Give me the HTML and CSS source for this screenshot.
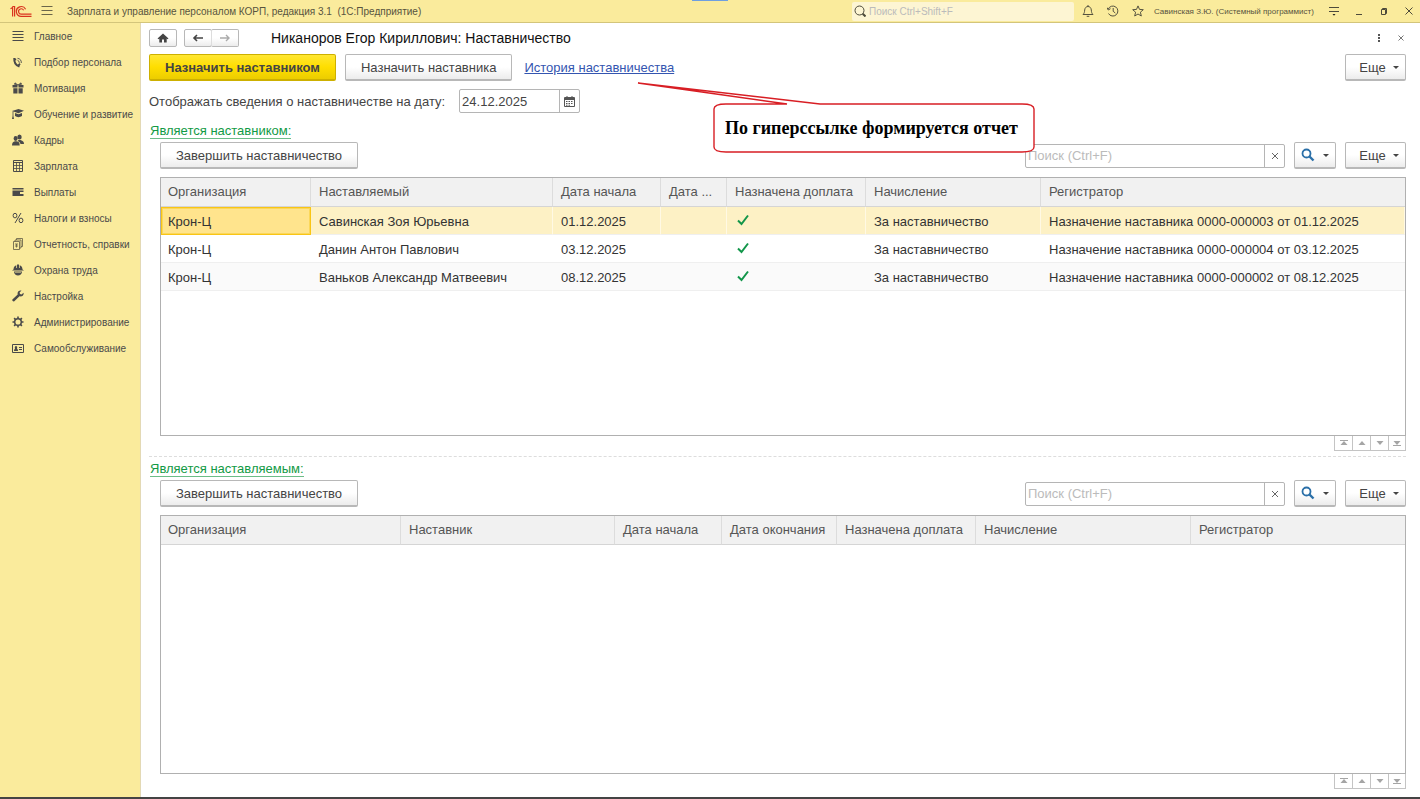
FILE: index.html
```html
<!DOCTYPE html>
<html lang="ru">
    <head>
        <meta charset="utf-8">
        <title>Никаноров Егор Кириллович: Наставничество</title>
        <link rel="stylesheet" href="styles.css">
    </head>
    <body>
        <!-- Top bar -->
        <header class="topbar">
            <svg class="logo" width="22" height="13" viewBox="0 0 22 13" fill="none" stroke="#d9341f" stroke-width="1.2">
                <path d="M0.5 3.8L2.600 2.500V11.500M2.300 1.500H4.600V11.500"/>
                <path d="M15.6 4.2A4.9 4.9 0 1 0 11.5 11.400H21.5"/>
                <path d="M13.6 5.200A2.700 2.700 0 1 0 11.5 9.200H21.5"/>
            </svg>
            <button class="icon-btn menu-btn" aria-label="Меню">
                <svg width="12" height="10" viewBox="0 0 12 10" stroke="#6b664a"><path d="M0.500 .5H11.500M0.500 4.500H11.500M0.500 8.500H11.500"/></svg>
            </button>
            <span class="app-title">Зарплата и управление персоналом КОРП, редакция 3.1&nbsp; (1С:Предприятие)</span>
            <label class="top-search">
                <svg width="12" height="12" viewBox="0 0 12 12" fill="none" stroke="#4d4a3a"><circle cx="5.500" cy="5.500" r="4.500"/><path d="M8.700 8.700L11.500 11.500" stroke-width="2"/></svg>
                <input type="text" placeholder="Поиск Ctrl+Shift+F" aria-label="Поиск">
            </label>
            <div class="top-icons">
                <button class="icon-btn" aria-label="Оповещения">
                    <svg width="12" height="12" viewBox="0 0 12 12" fill="none" stroke="#55523f"><path d="M1 9.500C2.500 8 2.500 7 2.700 5C2.900 2.800 4.200 1.500 6 1.500S9.100 2.800 9.300 5C9.500 7 9.500 8 11 9.500ZM6 0V1.500M4.700 11.300H7.300"/></svg>
                </button>
                <button class="icon-btn" aria-label="История">
                    <svg width="12" height="12" viewBox="0 0 12 12" fill="none" stroke="#55523f"><path d="M1.300 4A5 5 0 1 1 1.500 8.500M6.200 3V6.300L8.300 8"/><path d="M0 2.500L1.200 5L3.500 3.700"/></svg>
                </button>
                <button class="icon-btn" aria-label="Избранное">
                    <svg width="12" height="12" viewBox="0 0 12 12" fill="none" stroke="#55523f"><path d="M6 .9L7.500 4.400L11.300 4.700L8.400 7.200L9.300 11L6 9L2.700 11L3.600 7.200L.7 4.700L4.500 4.400Z"/></svg>
                </button>
            </div>
            <span class="user">Савинская З.Ю. (Системный программист)</span>
            <div class="window-icons">
                <button class="icon-btn" aria-label="Сервис">
                    <svg width="12" height="12" viewBox="0 0 12 12" stroke="#4d4a3a"><path d="M1 2.500H11M1 6.500H11"/><path d="M4.500 9L6 10.800L7.500 9Z" fill="#222" stroke="none"/></svg>
                </button>
                <button class="icon-btn" aria-label="Свернуть">
                    <svg width="12" height="12" viewBox="0 0 12 12" stroke="#4d4a3a"><path d="M3 9.500H9"/></svg>
                </button>
                <button class="icon-btn" aria-label="Восстановить">
                    <svg width="12" height="12" viewBox="0 0 12 12" fill="none" stroke="#4d4a3a"><path d="M3.500 4.500H7.500V9.500H3.500ZM4.500 4.500V3.500H8.500V8.500H7.500"/></svg>
                </button>
                <button class="icon-btn" aria-label="Закрыть">
                    <svg width="12" height="12" viewBox="0 0 12 12" stroke="#4d4a3a"><path d="M2.500 2.500L9.500 9.500M9.500 2.500L2.500 9.500"/></svg>
                </button>
            </div>
            <i class="screen-tab"></i>
        </header>

        <div class="page">
            <!-- Sections -->
            <nav class="sidebar">
                <a href="#"><svg width="12" height="12" viewBox="0 0 12 12" stroke="#4a4a4a"><path d="M0.500 1.500H11.500M0.500 4.500H11.500M0.500 7.500H11.500M0.500 10.500H11.500"/></svg>Главное</a>
                <a href="#"><svg width="12" height="12" viewBox="0 0 12 12" fill="none" stroke="#4a4a4a"><path d="M2.300 2C2 6 4 9.500 7.500 10.500" stroke-width="2"/><path d="M2 3.700L4.200 3.300M6.300 9.700L8 7.700" stroke-width="1.800"/><path d="M5.500 4.300A2.500 2.500 0 0 1 7.300 6.800M5.500 2.300A4.500 4.500 0 0 1 9.300 7" stroke-width=".9"/></svg>Подбор персонала</a>
                <a href="#"><svg width="12" height="12" viewBox="0 0 12 12" fill="#4a4a4a"><path d="M.5 3H5.500V5.500H.5ZM6.500 3H11.500V5.500H6.500ZM1.300 6.200H5.500V11.500H1.300ZM6.500 6.200H10.700V11.500H6.500Z"/><path d="M6 3L3 .8L2.300 2.300ZM6 3L9 .8L9.700 2.300Z" stroke="#4a4a4a" stroke-width=".6"/></svg>Мотивация</a>
                <a href="#"><svg width="12" height="12" viewBox="0 0 12 12" fill="#4a4a4a"><path d="M0 3L6.500 1L12 2.800L6.500 5.200ZM3 5L6.500 6.200L10 5V8C8 9.500 5 9.500 3 8ZM.6 3.500H1.400V8L2 11H0L.6 8Z"/></svg>Обучение и развитие</a>
                <a href="#"><svg width="12" height="12" viewBox="0 0 12 12" fill="#4a4a4a"><ellipse cx="7.500" cy="3" rx="2.200" ry="2.600"/><ellipse cx="3.600" cy="4.500" rx="2" ry="2.400"/><path d="M6.500 6L8.500 6C11 7 12 7.500 12 10H8.500C8 8 7 7.500 5.700 7ZM0 11.500C0 8.500 1 8 3 7.300H4.500C7 8 7.700 8.500 7.700 11.500Z"/></svg>Кадры</a>
                <a href="#"><svg width="12" height="12" viewBox="0 0 12 12" fill="none" stroke="#4a4a4a"><path d="M1.500 .5H10.500V11.500H1.500ZM1.500 2.500H10.500"/><path d="M1.500 5.500H10.500M1.500 8.500H10.500M4.500 3V11M7.500 3V11" stroke-width=".8"/></svg>Зарплата</a>
                <a href="#"><svg width="12" height="12" viewBox="0 0 12 12" fill="#4a4a4a"><path d="M.5 2H11.500V3.500H.5ZM.5 4.500H11.500V6H8V8H11.500V10H.5Z"/></svg>Выплаты</a>
                <a href="#"><svg width="12" height="12" viewBox="0 0 12 12" fill="none" stroke="#4a4a4a"><ellipse cx="3" cy="3.600" rx="1.900" ry="2.300"/><ellipse cx="9" cy="8.400" rx="1.900" ry="2.300"/><path d="M9 1L3 11"/></svg>Налоги и взносы</a>
                <a href="#"><svg width="12" height="12" viewBox="0 0 12 12" fill="none" stroke="#5f5b45" stroke-width=".8"><path d="M1.500 3.500H7.500V11.500H1.500ZM3 3.500V2H9V10H7.500M4.500 2V.5H10.500V8.500H9M3 6H6M3 8H6M4.500 6V9.500"/></svg>Отчетность, справки</a>
                <a href="#"><svg width="12" height="12" viewBox="0 0 12 12" fill="#4a4a4a"><path d="M1.500 5.500C1.500 3 3 1.500 4.300 1.300V4H5V.5H7V4H7.700V1.300C9 1.500 10.500 3 10.500 5.500L12 6.500H0ZM2 7.500H10C10 10 8 11.500 6 11.500S2 10 2 7.500ZM3 8.500H9V8H3Z" fill-rule="evenodd"/></svg>Охрана труда</a>
                <a href="#"><svg width="12" height="12" viewBox="0 0 12 12" fill="#4a4a4a"><path d="M11.500 2.800L9.500 4.500L8 4L7.600 2.500L9.500 .6C7 0 5 2 5.700 4.500L.4 9.600C-.2 10.500 1.200 12 2.300 11.300L7.500 6.300C10 7 12.200 5 11.500 2.800Z"/></svg>Настройка</a>
                <a href="#"><svg width="12" height="12" viewBox="0 0 12 12" fill="none" stroke="#4a4a4a"><circle cx="6" cy="6" r="3.300" stroke-width="1.500"/><path d="M6 .5V2.500M6 9.500V11.500M.5 6H2.500M9.500 6H11.500M2.100 2.100L3.500 3.500M8.500 8.500L9.900 9.900M9.900 2.100L8.500 3.500M3.500 8.500L2.100 9.900" stroke-width="1.600"/></svg>Администрирование</a>
                <a href="#"><svg width="12" height="12" viewBox="0 0 12 12" fill="none" stroke="#4a4a4a"><path d="M.5 2.500H11.500V10.500H.5ZM7 5.500H10M7 7.500H10"/><path d="M2 9C2 7 3 7.200 3 6.500C2.500 5 3 4 4 4S5.500 5 5 6.500C5 7.200 6 7 6 9Z" fill="#4a4a4a" stroke="none"/></svg>Самообслуживание</a>
            </nav>

            <main class="content">
                <div class="form-head">
                    <button class="nav-btn home" aria-label="Домой">
                        <svg width="12" height="10" viewBox="0 0 12 10" fill="#444"><path d="M6 .5L11.500 5.500L10.500 6.300L9.700 5.600V9.500H7V6.500H5V9.500H2.300V5.600L1.500 6.300L.5 5.500Z"/></svg>
                    </button>
                    <div class="nav-pair">
                        <button class="nav-btn" aria-label="Назад"><svg width="12" height="8" viewBox="0 0 12 8" fill="none" stroke="#444" stroke-width="1.600"><path d="M11 4H2M5 1L2 4L5 7"/></svg></button>
                        <button class="nav-btn" aria-label="Вперед"><svg width="12" height="8" viewBox="0 0 12 8" fill="none" stroke="#aaa" stroke-width="1.400"><path d="M1 4H10M7 1L10 4L7 7"/></svg></button>
                    </div>
                    <h1>Никаноров Егор Кириллович: Наставничество</h1>
                    <div class="form-tools">
                        <button class="icon-btn" aria-label="Еще действия"><svg width="10" height="10" viewBox="0 0 10 10" fill="#555"><path d="M4 1H6V3H4ZM4 4H6V6H4ZM4 7H6V9H4Z"/></svg></button>
                        <button class="icon-btn" aria-label="Закрыть форму"><svg width="10" height="10" viewBox="0 0 10 10" stroke="#777"><path d="M2.500 2.500L7.500 7.500M7.500 2.500L2.500 7.500"/></svg></button>
                    </div>
                </div>

                <div class="commands">
                    <button class="btn primary">Назначить наставником</button>
                    <button class="btn">Назначить наставника</button>
                    <a class="history" href="#">История наставничества</a>
                    <button class="btn more">Еще<i class="caret"></i></button>
                </div>

                <div class="date-row">
                    <label for="date">Отображать сведения о наставничестве на дату:</label>
                    <div class="field date-field">
                        <input type="text" id="date" value="24.12.2025">
                        <button aria-label="Выбрать дату">
                            <svg width="11" height="11" viewBox="0 0 11 11"><path d="M.5 1.500H10.500V10.500H.5Z" fill="#fff" stroke="#555"/><path d="M1 1H10V4H1ZM2.500 0H3.500V1H2.500ZM7.500 0H8.500V1H7.500Z" fill="#555"/><path d="M2 5.500H9M2 7.500H9M2 9.200H7" stroke="#555" stroke-dasharray="1.500 1"/></svg>
                        </button>
                    </div>
                </div>

                <section class="block">
                    <a class="group-title" href="#">Является наставником:</a>
                    <div class="toolbar">
                        <button class="btn">Завершить наставничество</button>
                        <div class="field search-field">
                            <input type="text" placeholder="Поиск (Ctrl+F)" aria-label="Поиск">
                            <button aria-label="Очистить"><svg width="8" height="8" viewBox="0 0 8 8" stroke="#666"><path d="M1 1L7 7M7 1L1 7"/></svg></button>
                        </div>
                        <button class="btn find" aria-label="Найти"><svg width="14" height="14" viewBox="0 0 14 14" fill="none" stroke="#2a6fa8" stroke-width="1.800"><circle cx="5.500" cy="5.500" r="4"/><path d="M8.500 8.500L12.500 12.500" stroke-width="2.400"/></svg><i class="caret"></i></button>
                        <button class="btn more">Еще<i class="caret"></i></button>
                    </div>
                    <div class="grid">
                        <table>
                            <colgroup>
                                <col class="c150"><col class="c242"><col class="c108"><col class="c66"><col class="c139"><col class="c175"><col>
                            </colgroup>
                            <thead>
                                <tr><th>Организация</th><th>Наставляемый</th><th>Дата начала</th><th>Дата ...</th><th>Назначена доплата</th><th>Начисление</th><th>Регистратор</th></tr>
                            </thead>
                            <tbody>
                                <tr class="selected">
                                    <td class="current">Крон-Ц</td><td>Савинская Зоя Юрьевна</td><td>01.12.2025</td><td></td>
                                    <td><svg class="check" width="14" height="12" viewBox="0 0 14 12"><path d="M2 6.500L5.500 10L12 1.500"/></svg></td>
                                    <td>За наставничество</td><td>Назначение наставника 0000-000003 от 01.12.2025</td>
                                </tr>
                                <tr>
                                    <td>Крон-Ц</td><td>Данин Антон Павлович</td><td>03.12.2025</td><td></td>
                                    <td><svg class="check" width="14" height="12" viewBox="0 0 14 12"><path d="M2 6.500L5.500 10L12 1.500"/></svg></td>
                                    <td>За наставничество</td><td>Назначение наставника 0000-000004 от 03.12.2025</td>
                                </tr>
                                <tr class="even">
                                    <td>Крон-Ц</td><td>Ваньков Александр Матвеевич</td><td>08.12.2025</td><td></td>
                                    <td><svg class="check" width="14" height="12" viewBox="0 0 14 12"><path d="M2 6.500L5.500 10L12 1.500"/></svg></td>
                                    <td>За наставничество</td><td>Назначение наставника 0000-000002 от 08.12.2025</td>
                                </tr>
                            </tbody>
                        </table>
                    </div>
                    <div class="pager">
                        <button aria-label="В начало"><svg width="10" height="6" viewBox="0 0 10 6"><path d="M1 0H9V1H1ZM5 1L8.500 5H1.500Z"/></svg></button>
                        <button aria-label="Вверх"><svg width="10" height="6" viewBox="0 0 10 6"><path d="M5 1L8.500 5H1.500Z"/></svg></button>
                        <button aria-label="Вниз"><svg width="10" height="6" viewBox="0 0 10 6"><path d="M1.500 1H8.500L5 5Z"/></svg></button>
                        <button aria-label="В конец"><svg width="10" height="6" viewBox="0 0 10 6"><path d="M1.500 1H8.500L5 5ZM1 5H9V6H1Z"/></svg></button>
                    </div>
                </section>

                <hr class="divider">

                <section class="block">
                    <a class="group-title" href="#">Является наставляемым:</a>
                    <div class="toolbar">
                        <button class="btn">Завершить наставничество</button>
                        <div class="field search-field">
                            <input type="text" placeholder="Поиск (Ctrl+F)" aria-label="Поиск">
                            <button aria-label="Очистить"><svg width="8" height="8" viewBox="0 0 8 8" stroke="#666"><path d="M1 1L7 7M7 1L1 7"/></svg></button>
                        </div>
                        <button class="btn find" aria-label="Найти"><svg width="14" height="14" viewBox="0 0 14 14" fill="none" stroke="#2a6fa8" stroke-width="1.800"><circle cx="5.500" cy="5.500" r="4"/><path d="M8.500 8.500L12.500 12.500" stroke-width="2.400"/></svg><i class="caret"></i></button>
                        <button class="btn more">Еще<i class="caret"></i></button>
                    </div>
                    <div class="grid">
                        <table>
                            <colgroup>
                                <col class="c240"><col class="c214"><col class="c107"><col class="c115"><col class="c139"><col class="c215"><col>
                            </colgroup>
                            <thead>
                                <tr><th>Организация</th><th>Наставник</th><th>Дата начала</th><th>Дата окончания</th><th>Назначена доплата</th><th>Начисление</th><th>Регистратор</th></tr>
                            </thead>
                        </table>
                    </div>
                    <div class="pager">
                        <button aria-label="В начало"><svg width="10" height="6" viewBox="0 0 10 6"><path d="M1 0H9V1H1ZM5 1L8.500 5H1.500Z"/></svg></button>
                        <button aria-label="Вверх"><svg width="10" height="6" viewBox="0 0 10 6"><path d="M5 1L8.500 5H1.500Z"/></svg></button>
                        <button aria-label="Вниз"><svg width="10" height="6" viewBox="0 0 10 6"><path d="M1.500 1H8.500L5 5Z"/></svg></button>
                        <button aria-label="В конец"><svg width="10" height="6" viewBox="0 0 10 6"><path d="M1.500 1H8.500L5 5ZM1 5H9V6H1Z"/></svg></button>
                    </div>
                </section>

                <!-- Callout to the history link -->
                <div class="callout">
                    <svg width="400" height="72" viewBox="0 0 400 72" fill="#fff" stroke="#d81e24" stroke-width="1.400"><path d="M2 1L184 22H386Q398 22 398 27V65Q398 70 386 70H90Q78 70 78 65V27Q78 22 90 22H151Z"/></svg>
                    <span>По гиперссылке формируется отчет</span>
                </div>
            </main>
        </div>
    </body>
</html>
```

FILE: styles.css
```css
* {
    box-sizing: border-box;
}

body {
    display: flex;
    flex-direction: column;
    height: 100vh;
    margin: 0;
    border-bottom: 2px solid #444;
    background: #fff;
    color: #444;
    font-family: "Liberation Sans", Arial, sans-serif;
    font-size: 13px;
}

button,
input {
    margin: 0;
    padding: 0;
    font: inherit;
    color: inherit;
}

svg {
    display: block;
    flex: none;
}

/* top bar */
.topbar {
    position: relative;
    display: flex;
    align-items: center;
    flex: none;
    height: 23px;
    padding: 0 5px 0 10px;
    background: #faeb9c;
    border-bottom: 1px solid #d3c57b;
    font-size: 10px;
}

.icon-btn {
    display: flex;
    align-items: center;
    justify-content: center;
    border: 0;
    background: none;
}

.menu-btn {
    margin: 0 14px 0 9px;
}

.app-title {
    color: #57533e;
}

.top-search {
    display: flex;
    align-items: center;
    gap: 3px;
    width: 222px;
    height: 19px;
    margin-left: auto;
    padding-left: 2px;
    border-radius: 2px;
    background: #fdf5d3;
}

.top-search input {
    flex: 1;
    min-width: 0;
    border: 0;
    background: none;
}

input::placeholder {
    color: #bbb;
    opacity: 1;
}

.top-icons,
.window-icons {
    display: flex;
    gap: 13px;
}

.top-icons {
    margin: 0 10px 0 8px;
}

.user {
    width: 165px;
    color: #57533e;
    font-size: 8px;
    white-space: nowrap;
}

.window-icons {
    margin-left: 9px;
}

.screen-tab {
    position: absolute;
    top: 0;
    left: 692px;
    width: 36px;
    height: 1px;
    background: #6f9fe0;
}

.page {
    display: flex;
    flex: 1;
    min-height: 0;
}

/* sections */
.sidebar {
    flex: none;
    width: 141px;
    background: #faeb9c;
    border-right: 1px solid #e3d9b5;
}

.sidebar a {
    display: flex;
    align-items: center;
    gap: 10px;
    height: 26px;
    padding-left: 12px;
    color: #4a4a4a;
    font-size: 10px;
    text-decoration: none;
    white-space: nowrap;
}

/* form */
.content {
    position: relative;
    display: flex;
    flex-direction: column;
    flex: 1;
    min-width: 0;
    padding: 6px 14px 8px 8px;
}

.form-head {
    display: flex;
    align-items: center;
    height: 18px;
}

.nav-btn {
    display: flex;
    align-items: center;
    justify-content: center;
    width: 28px;
    height: 18px;
    border: 1px solid #b8b8b8;
    border-radius: 2px;
    background: linear-gradient(#fff 50%, #ececec);
}

.nav-pair {
    display: flex;
    margin-left: 7px;
}

.nav-pair .nav-btn + .nav-btn {
    margin-left: -1px;
    border-left-color: #ddd;
}

.form-head h1 {
    margin: 0 0 0 32px;
    color: #111;
    font-size: 14px;
    font-weight: normal;
}

.form-tools {
    display: flex;
    gap: 12px;
    margin-left: auto;
}

.commands {
    display: flex;
    align-items: center;
    gap: 9px;
    margin-top: 7px;
}

.btn {
    display: flex;
    align-items: center;
    justify-content: center;
    height: 27px;
    padding: 0 15px;
    border: 1px solid #b8b8b8;
    border-bottom: 2px solid #b8b8b8;
    border-radius: 2px;
    background: linear-gradient(#fff 50%, #ececec);
    white-space: nowrap;
}

.btn.primary {
    border-color: #cdb000;
    background: linear-gradient(#ffe733, #ffde00 50%, #eccd00);
    font-weight: bold;
}

.btn.more {
    width: 61px;
    padding: 0 0 0 7px;
    gap: 7px;
}

.commands .more {
    margin-left: auto;
}

.caret {
    border: 3px solid transparent;
    border-top-color: #444;
    border-bottom: 0;
}

.history {
    margin-left: 3px;
    color: #3455b0;
}

.date-row {
    display: flex;
    align-items: center;
    gap: 14px;
    margin-top: 8px;
}

.field {
    display: flex;
    height: 24px;
    border: 1px solid #b5b5b5;
    border-radius: 2px;
    background: #fff;
}

.field input {
    flex: 1;
    min-width: 0;
    padding: 0 2px;
    border: 0;
    background: none;
}

.field button {
    display: flex;
    align-items: center;
    justify-content: center;
    width: 20px;
    border: 0;
    border-left: 1px solid #b5b5b5;
    background: none;
}

.date-field {
    width: 121px;
}

/* lists */
.block {
    display: flex;
    flex-direction: column;
    flex: 1;
    min-height: 0;
}

.date-row + .block {
    margin-top: 11px;
}

.divider {
    width: 100%;
    margin: 5px 0;
    border: 0;
    border-top: 1px dashed #ddd;
}

.group-title {
    align-self: flex-start;
    margin-left: 1px;
    border-bottom: 1px solid #6bbd87;
    color: #129a45;
    line-height: 14px;
    text-decoration: none;
}

.toolbar {
    display: flex;
    align-items: center;
    gap: 9px;
    margin: 3px 0 8px 11px;
}

.search-field {
    width: 260px;
    margin-left: auto;
}

.btn.find {
    width: 42px;
    padding: 0;
    gap: 8px;
}

.grid {
    flex: 1;
    min-height: 0;
    margin-left: 11px;
    overflow: hidden;
    border: 1px solid #b0b0b0;
}

.grid table {
    width: 100%;
    table-layout: fixed;
    border-collapse: separate;
    border-spacing: 0;
}

.grid th,
.grid td {
    height: 28px;
    padding: 2px 0 0 8px;
    overflow: hidden;
    text-align: left;
    text-overflow: ellipsis;
    white-space: nowrap;
}

.grid th {
    height: 29px;
    padding: 0 0 1px 8px;
    border-right: 1px solid #dcdcdc;
    border-bottom: 1px solid #d5d5d5;
    background: #f1f1f1;
    color: #555;
    font-weight: normal;
}

.grid th:last-child {
    border-right: 0;
}

.grid td {
    border-bottom: 1px solid #efefef;
    color: #333;
}

.grid th:first-child,
.grid td:first-child {
    padding-left: 7px;
}

.selected td {
    border-right: 1px solid #fff9e4;
    background: #fdf1c5;
}

.grid .selected .current {
    padding: 1px 0 0 6px;
    border: 1px solid #f9c515;
    background: #ffe48d;
    box-shadow: inset 0 0 0 1px #fbd75a;
}

.even td {
    background: #fafafa;
}

.check {
    margin: 0 0 4px 1px;
    fill: none;
    stroke: #12964a;
    stroke-width: 2;
}

.c66 { width: 66px; }
.c107 { width: 107px; }
.c108 { width: 108px; }
.c115 { width: 115px; }
.c139 { width: 139px; }
.c150 { width: 150px; }
.c175 { width: 175px; }
.c214 { width: 214px; }
.c215 { width: 215px; }
.c240 { width: 240px; }
.c242 { width: 242px; }

.pager {
    display: flex;
    align-self: flex-end;
}

.pager button {
    display: flex;
    align-items: center;
    justify-content: center;
    width: 18px;
    height: 15px;
    border: 1px solid #c4c4c4;
    border-width: 0 0 1px 1px;
    background: #fff;
}

.pager button:last-child {
    border-right-width: 1px;
}

.pager svg {
    fill: #a5a5a5;
}

/* callout lies over the form */
.callout {
    position: absolute;
    top: 59px;
    left: 495px;
    width: 400px;
    height: 72px;
}

.callout span {
    position: absolute;
    top: 36px;
    left: 89px;
    color: #000;
    font-family: "Liberation Serif", "Times New Roman", serif;
    font-size: 18px;
    font-weight: bold;
    line-height: 20px;
    white-space: nowrap;
}
```
